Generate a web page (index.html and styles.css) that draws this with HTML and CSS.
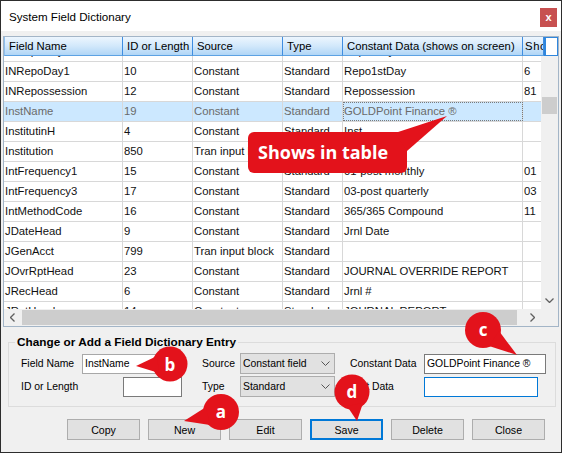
FILE: index.html
```html
<!DOCTYPE html>
<html>
<head>
<meta charset="utf-8">
<title>System Field Dictionary</title>
<link rel="stylesheet" href="styles.css">
</head>
<body>
<div class="window">
  <div class="titlebar">
    <span class="title">System Field Dictionary</span>
    <span class="close">x</span>
  </div>

  <div class="grid">
    <div class="gh">
      <div class="w1">Field Name</div>
      <div class="w2">ID or Length</div>
      <div class="w3">Source</div>
      <div class="w4">Type</div>
      <div class="w5">Constant Data (shows on screen)</div>
      <div class="w6h">Short</div>
      <div class="filler"></div>
    </div>
    <div class="gbody">
      <div class="rows">
        <div class="row"><div class="c w1">INRepoDay</div><div class="c w2">11</div><div class="c w3">Constant</div><div class="c w4">Standard</div><div class="c w5">Repo Day</div><div class="c w6"></div></div>
        <div class="row"><div class="c w1">INRepoDay1</div><div class="c w2">10</div><div class="c w3">Constant</div><div class="c w4">Standard</div><div class="c w5">Repo1stDay</div><div class="c w6">6</div></div>
        <div class="row"><div class="c w1">INRepossession</div><div class="c w2">12</div><div class="c w3">Constant</div><div class="c w4">Standard</div><div class="c w5">Repossession</div><div class="c w6">81</div></div>
        <div class="row sel"><div class="c w1">InstName</div><div class="c w2">19</div><div class="c w3">Constant</div><div class="c w4">Standard</div><div class="c w5 focus">GOLDPoint Finance ®</div><div class="c w6"></div></div>
        <div class="row"><div class="c w1">InstitutinH</div><div class="c w2">4</div><div class="c w3">Constant</div><div class="c w4">Standard</div><div class="c w5">Inst</div><div class="c w6"></div></div>
        <div class="row"><div class="c w1">Institution</div><div class="c w2">850</div><div class="c w3">Tran input block</div><div class="c w4">Standard</div><div class="c w5"></div><div class="c w6"></div></div>
        <div class="row"><div class="c w1">IntFrequency1</div><div class="c w2">15</div><div class="c w3">Constant</div><div class="c w4">Standard</div><div class="c w5">01-post monthly</div><div class="c w6">01</div></div>
        <div class="row"><div class="c w1">IntFrequency3</div><div class="c w2">17</div><div class="c w3">Constant</div><div class="c w4">Standard</div><div class="c w5">03-post quarterly</div><div class="c w6">03</div></div>
        <div class="row"><div class="c w1">IntMethodCode</div><div class="c w2">16</div><div class="c w3">Constant</div><div class="c w4">Standard</div><div class="c w5">365/365 Compound</div><div class="c w6">11</div></div>
        <div class="row"><div class="c w1">JDateHead</div><div class="c w2">9</div><div class="c w3">Constant</div><div class="c w4">Standard</div><div class="c w5">Jrnl Date</div><div class="c w6"></div></div>
        <div class="row"><div class="c w1">JGenAcct</div><div class="c w2">799</div><div class="c w3">Tran input block</div><div class="c w4">Standard</div><div class="c w5"></div><div class="c w6"></div></div>
        <div class="row"><div class="c w1">JOvrRptHead</div><div class="c w2">23</div><div class="c w3">Constant</div><div class="c w4">Standard</div><div class="c w5">JOURNAL OVERRIDE REPORT</div><div class="c w6"></div></div>
        <div class="row"><div class="c w1">JRecHead</div><div class="c w2">6</div><div class="c w3">Constant</div><div class="c w4">Standard</div><div class="c w5">Jrnl #</div><div class="c w6"></div></div>
        <div class="row"><div class="c w1">JRptHead</div><div class="c w2">14</div><div class="c w3">Constant</div><div class="c w4">Standard</div><div class="c w5">JOURNAL REPORT</div><div class="c w6"></div></div>
      </div>
      <div class="vscroll">
        <div class="vthumb"></div>
        <div class="varrow"><svg width="9" height="5" viewBox="0 0 9 5"><polyline points="0.5,0.5 4.5,4.5 8.5,0.5" class="chev"/></svg></div>
      </div>
    </div>
    <div class="hrow">
      <div class="hscroll">
        <div class="harrow"><svg width="5" height="9" viewBox="0 0 5 9"><polyline points="4.5,0.5 0.5,4.5 4.5,8.5" class="chev"/></svg></div>
        <div class="hthumb"></div>
        <div class="harrow right"><svg width="5" height="9" viewBox="0 0 5 9"><polyline points="0.5,0.5 4.5,4.5 0.5,8.5" class="chev"/></svg></div>
      </div>
      <div class="corner"></div>
    </div>
  </div>

  <fieldset class="entry">
    <legend>Change or Add a Field Dictionary Entry</legend>
    <div class="form">
      <span class="lbl">Field Name</span>
      <div class="input name">InstName</div>
      <span class="lbl pad">Source</span>
      <div class="combo"><span>Constant field</span><svg width="9" height="5" viewBox="0 0 9 5"><polyline points="0.5,0.5 4.5,4.5 8.5,0.5" class="chev light"/></svg></div>
      <span class="lbl">Constant Data</span>
      <div class="input dark">GOLDPoint Finance ®</div>

      <span class="lbl">ID or Length</span>
      <div class="input dark idlen"></div>
      <span class="lbl pad">Type</span>
      <div class="combo"><span>Standard</span><svg width="9" height="5" viewBox="0 0 9 5"><polyline points="0.5,0.5 4.5,4.5 8.5,0.5" class="chev light"/></svg></div>
      <span class="lbl">Test Data</span>
      <div class="input focused testdata"></div>
    </div>
  </fieldset>

  <div class="buttons">
    <div class="btn">Copy</div>
    <div class="btn">New</div>
    <div class="btn">Edit</div>
    <div class="btn default">Save</div>
    <div class="btn">Delete</div>
    <div class="btn">Close</div>
  </div>

  <svg class="overlay" width="562" height="453" viewBox="0 0 562 453">
    <g class="callout-shape">
      <rect x="248" y="132" width="159" height="41" rx="6" ry="6"/>
      <polygon points="395,133 447,116 407,151"/>
      <circle cx="170" cy="364" r="17.5"/>
      <polygon points="136,366 157,356 159,373"/>
      <circle cx="221" cy="412" r="18"/>
      <polygon points="184,421 206,407 210,425"/>
      <circle cx="483" cy="330" r="18"/>
      <polygon points="499,331 517,355 489,346"/>
      <circle cx="352" cy="392" r="17.5"/>
      <polygon points="347,406 363,403 357,421"/>
    </g>
    <text x="258" y="159" class="callout-text">Shows in table</text>
    <text x="170" y="371" class="callout-letter">b</text>
    <text x="221" y="418" class="callout-letter">a</text>
    <text x="483" y="336" class="callout-letter">c</text>
    <text x="352" y="398" class="callout-letter">d</text>
  </svg>
</div>
</body>
</html>
```

FILE: styles.css
```css
html, body {
  margin: 0;
  padding: 0;
  background: #ffffff;
}

.window {
  width: 562px;
  height: 453px;
  box-sizing: border-box;
  border: 1px solid #2d2d2d;
  background: #f0f0f0;
  position: relative;
  overflow: hidden;
  display: flex;
  flex-direction: column;
  font-family: "Liberation Sans", Arial, sans-serif;
  font-size: 11.3px;
  color: #000;
}

/* title bar */
.titlebar {
  height: 30px;
  flex: none;
  background: #ffffff;
  display: flex;
  align-items: flex-start;
}
.title {
  margin: 9px 0 0 8px;
  font-size: 11.6px;
  line-height: 14px;
  color: #000;
}
.close {
  margin: 7px 4px 0 auto;
  width: 17px;
  height: 19px;
  background: #c75050;
  color: #fff;
  font-size: 11px;
  font-weight: bold;
  line-height: 1;
  display: flex;
  align-items: center;
  justify-content: center;
}

/* data grid */
.grid {
  margin: 5px 0 0 2px;
  width: 556px;
  height: 291px;
  flex: none;
  box-sizing: border-box;
  border: 1px solid #a3b5c7;
  background: #ffffff;
  display: flex;
  flex-direction: column;
}
.gh {
  display: flex;
  height: 19px;
  flex: none;
}
.gh > div {
  box-sizing: border-box;
  height: 19px;
  padding-left: 4px;
  line-height: 18px;
  white-space: nowrap;
  overflow: hidden;
  background: linear-gradient(#edf6fe, #d2e8fb 50%, #b1d6f6);
  border-right: 1px solid #3f8de0;
  border-bottom: 1px solid #5da2e3;
  color: #000;
}
.gh > .w1 { border-left: 1px solid #8fc0ee; }
.gh > .w6h { width: 21px; flex: none; padding-left: 2px; letter-spacing: 0.6px; }
.gh > .filler {
  width: 14px;
  flex: none;
  background: #ffffff;
  border: 1px solid #2f86dc;
  border-left-width: 2px;
}

.w1 { width: 119px; flex: none; }
.w2 { width: 70px; flex: none; }
.w3 { width: 90px; flex: none; }
.w4 { width: 60px; flex: none; }
.w5 { width: 180px; flex: none; }
.w6 { width: 18px; flex: none; }

.gbody {
  display: flex;
  height: 253px;
  flex: none;
}
.rows {
  width: 537px;
  flex: none;
  overflow: hidden;
}
.row {
  display: flex;
  height: 20px;
  box-sizing: border-box;
  border-bottom: 1px solid #d8d8d8;
  color: #111;
}
.row:first-child {
  margin-top: -14px;
}
.c {
  box-sizing: border-box;
  height: 19px;
  line-height: 19px;
  padding-left: 1px;
  white-space: nowrap;
  overflow: hidden;
  border-right: 1px solid #d8d8d8;
}
.c.w6 { border-right: none; }
.row.sel {
  background: #cce8ff;
  color: #6a6a6a;
}
.focus {
  outline: 1px dotted #7a7a7a;
  outline-offset: -1px;
}

.vscroll {
  width: 17px;
  flex: none;
  background: #f0f0f0;
  display: flex;
  flex-direction: column;
}
.vthumb {
  margin: 41px 1px 0;
  height: 17px;
  background: #cdcdcd;
}
.varrow {
  margin-top: auto;
  height: 17px;
  display: flex;
  align-items: center;
  justify-content: center;
}

.hrow {
  display: flex;
  height: 17px;
  flex: none;
}
.hscroll {
  width: 537px;
  flex: none;
  display: flex;
  align-items: center;
  background: #f0f0f0;
}
.harrow {
  width: 17px;
  height: 17px;
  flex: none;
  display: flex;
  align-items: center;
  justify-content: center;
}
.harrow.right { margin-left: auto; }
.hthumb {
  width: 495px;
  height: 15px;
  margin-left: 1px;
  background: #cdcdcd;
}
.corner {
  width: 17px;
  flex: none;
  background: #f0f0f0;
}

.chev {
  fill: none;
  stroke: #606060;
  stroke-width: 1.3;
}
.chev.light {
  stroke: #555;
  stroke-width: 1;
}

/* group box */
.entry {
  margin: 8px 0 0 7px;
  width: 548px;
  min-width: 0;
  box-sizing: border-box;
  border: 1px solid #dcdcdc;
  padding: 4px 0 9px 6px;
  flex: none;
  font-size: 10.4px;
}
.entry legend {
  padding: 0 2px;
  font-weight: bold;
  font-size: 11.8px;
  line-height: 14px;
}
.form {
  margin-left: 6px;
  display: grid;
  grid-template-columns: 61px 100px 58px 110px 74px 122px;
  grid-template-rows: 21px 21px;
  row-gap: 2px;
  align-items: center;
}
.lbl {
  white-space: nowrap;
}
.lbl.pad {
  padding-left: 20px;
}
.input {
  box-sizing: border-box;
  height: 20px;
  background: #fff;
  border: 1px solid #a8a8a8;
  padding-left: 2px;
  line-height: 18px;
  white-space: nowrap;
  overflow: hidden;
}
.input.name { width: 100px; }
.input.dark { border-color: #7a7a7a; }
.input.idlen { width: 59px; justify-self: end; }
.input.testdata { width: 114px; }
.input.focused { border-color: #0078d7; }
.combo {
  box-sizing: border-box;
  width: 95px;
  height: 21px;
  background: #e1e1e1;
  border: 1px solid #adadad;
  display: flex;
  align-items: center;
  justify-content: space-between;
  padding: 0 4px 0 2px;
  white-space: nowrap;
}

/* buttons */
.buttons {
  display: flex;
  gap: 8px;
  margin: 12px 0 0 66px;
  flex: none;
  font-size: 10.6px;
}
.btn {
  width: 73px;
  height: 21px;
  box-sizing: border-box;
  background: #e1e1e1;
  border: 1px solid #adadad;
  display: flex;
  align-items: center;
  justify-content: center;
}
.btn.default {
  border: 2px solid #0078d7;
}

/* annotation callouts */
.overlay {
  position: absolute;
  left: -1px;
  top: -1px;
  width: 562px;
  height: 453px;
  pointer-events: none;
}
.callout-shape {
  fill: #e3121b;
}
.callout-text {
  font-family: "Open Sans", "Liberation Sans", sans-serif;
  font-weight: 700;
  font-size: 18px;
  fill: #ffffff;
}
.callout-letter {
  font-family: "Open Sans", "Liberation Sans", sans-serif;
  font-weight: 700;
  font-size: 17px;
  fill: #ffffff;
  text-anchor: middle;
}
```
